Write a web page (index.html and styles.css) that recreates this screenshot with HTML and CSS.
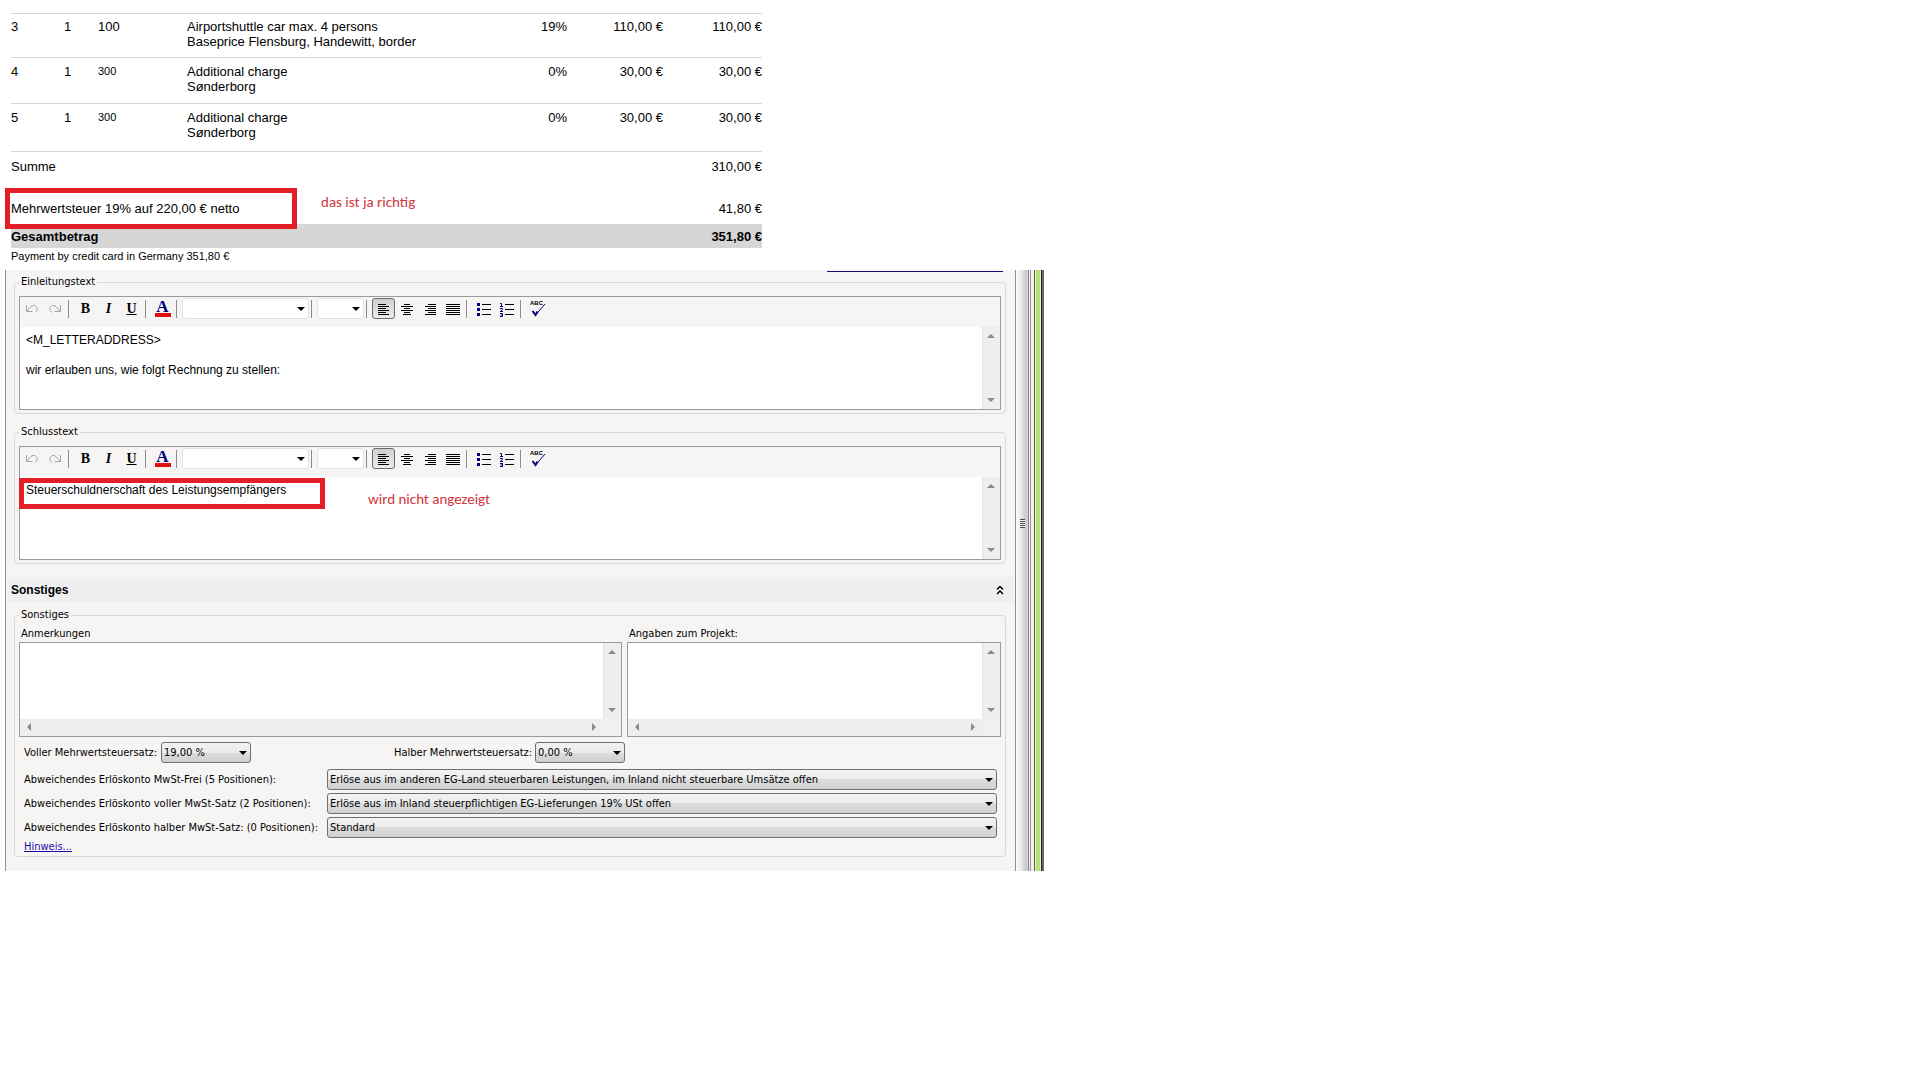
FILE: index.html
```html
<!DOCTYPE html>
<html lang="de">
<head>
    <meta charset="UTF-8">
    <meta name="viewport" content="width=device-width, initial-scale=1.0">
    <title>Rechnung</title>
    <link rel="stylesheet" href="styles.css">
</head>
<body>
<svg class="sprite" aria-hidden="true">
    <symbol id="undo" viewBox="0 0 16 16">
        <path d="M2.500 4v6.500h6M3 10l4-4.500 2-1h2l2 2v3l-2 2" fill="none" stroke="#a5a5a5"/>
    </symbol>
    <symbol id="redo" viewBox="0 0 16 16">
        <path d="M13.500 4v6.500h-6M13 10l-4-4.500-2-1h-2l-2 2v3l2 2" fill="none" stroke="#a5a5a5"/>
    </symbol>
    <symbol id="left" viewBox="0 0 16 16">
        <path d="M2 3.500h8M2 5.500h11M2 7.500h8M2 9.500h11M2 11.500h8M2 13.500h11" stroke="#000"/>
    </symbol>
    <symbol id="center" viewBox="0 0 16 16">
        <path d="M5 3.500h6M2 5.500h12M5 7.500h6M2 9.500h12M5 11.500h6M4 13.500h8" stroke="#000"/>
    </symbol>
    <symbol id="right" viewBox="0 0 16 16">
        <path d="M6 3.500h8M3 5.500h11M6 7.500h8M3 9.500h11M6 11.500h8M3 13.500h11" stroke="#000"/>
    </symbol>
    <symbol id="justify" viewBox="0 0 16 16">
        <path d="M1 3.500h14M1 5.500h14M1 7.500h14M1 9.500h14M1 11.500h14M1 13.500h14" stroke="#000"/>
    </symbol>
    <symbol id="bullets" viewBox="0 0 16 16">
        <path d="M1 2h3v3H1zM1 7h3v3H1zM1 12h3v3H1z" fill="#00007f"/>
        <path d="M6 3.500h9M6 8.500h9M6 13.500h9" stroke="#000"/>
    </symbol>
    <symbol id="numbers" viewBox="0 0 16 16">
        <path d="M1 2.500h1.500V5M1 5.500h3M1 7.500h2.500v1L1.500 10M1 10.500h3M1 12.500h2.500v3H1M1.500 14h2" fill="none" stroke="#00007f"/>
        <path d="M6 3.500h9M6 8.500h9M6 13.500h9" stroke="#000"/>
    </symbol>
    <symbol id="check" viewBox="0 0 16 16">
        <path d="M2.500 10l3 4 2-3.500" fill="none" stroke="#00007f" stroke-width="2"/>
        <path d="M6 13.500L15 3" fill="none" stroke="#00007f"/>
    </symbol>
    <symbol id="up" viewBox="0 0 8 8"><path d="M0 6h8L4 2z" fill="#8a8a8a"/></symbol>
    <symbol id="down" viewBox="0 0 8 8"><path d="M0 2h8L4 6z" fill="#8a8a8a"/></symbol>
    <symbol id="prev" viewBox="0 0 8 8"><path d="M6 0v8L2 4z" fill="#8a8a8a"/></symbol>
    <symbol id="next" viewBox="0 0 8 8"><path d="M2 0v8l4-4z" fill="#8a8a8a"/></symbol>
</svg>

<section class="invoice">
    <table class="positions">
        <colgroup>
            <col class="col-pos">
            <col class="col-qty">
            <col class="col-art">
            <col>
            <col class="col-tax">
            <col class="col-price">
            <col class="col-total">
        </colgroup>
        <tbody>
            <tr class="item">
                <td>3</td>
                <td>1</td>
                <td>100</td>
                <td>Airportshuttle car max. 4 persons<br>Baseprice Flensburg, Handewitt, border</td>
                <td class="num">19%</td>
                <td class="num">110,00 €</td>
                <td class="num">110,00 €</td>
            </tr>
            <tr class="item charge">
                <td>4</td>
                <td>1</td>
                <td class="small">300</td>
                <td>Additional charge<br>Sønderborg</td>
                <td class="num">0%</td>
                <td class="num">30,00 €</td>
                <td class="num">30,00 €</td>
            </tr>
            <tr class="item charge last">
                <td>5</td>
                <td>1</td>
                <td class="small">300</td>
                <td>Additional charge<br>Sønderborg</td>
                <td class="num">0%</td>
                <td class="num">30,00 €</td>
                <td class="num">30,00 €</td>
            </tr>
        </tbody>
        <tfoot>
            <tr class="sum">
                <td colspan="6">Summe</td>
                <td class="num">310,00 €</td>
            </tr>
            <tr class="vat">
                <td colspan="6">Mehrwertsteuer 19% auf 220,00 € netto</td>
                <td class="num">41,80 €</td>
            </tr>
            <tr class="total">
                <td colspan="6">Gesamtbetrag</td>
                <td class="num">351,80 €</td>
            </tr>
        </tfoot>
    </table>
    <p class="payment">Payment by credit card in Germany 351,80 €</p>
    <div class="mark mark-vat"></div>
    <div class="note note-vat">das ist ja richtig</div>
</section>

<div class="window">
    <form class="panel">
        <div class="link-line"></div>
        <fieldset>
            <legend>Einleitungstext</legend>
            <div class="editor">
                <div class="toolbar">
                    <button type="button" aria-label="Rückgängig"><svg><use href="#undo"/></svg></button>
                    <button type="button" aria-label="Wiederholen"><svg><use href="#redo"/></svg></button>
                    <span class="sep"></span>
                    <button type="button" class="bold">B</button>
                    <button type="button" class="italic">I</button>
                    <button type="button" class="underline">U</button>
                    <span class="sep"></span>
                    <button type="button" class="color"><span>A</span></button>
                    <span class="sep"></span>
                    <span class="select flat font"><select aria-label="Schriftart"><option></option></select></span>
                    <span class="sep"></span>
                    <span class="select flat size"><select aria-label="Schriftgröße"><option></option></select></span>
                    <span class="sep"></span>
                    <button type="button" class="active" aria-label="Linksbündig"><svg><use href="#left"/></svg></button>
                    <button type="button" aria-label="Zentriert"><svg><use href="#center"/></svg></button>
                    <button type="button" aria-label="Rechtsbündig"><svg><use href="#right"/></svg></button>
                    <button type="button" aria-label="Blocksatz"><svg><use href="#justify"/></svg></button>
                    <span class="sep"></span>
                    <button type="button" aria-label="Aufzählung"><svg><use href="#bullets"/></svg></button>
                    <button type="button" aria-label="Nummerierung"><svg><use href="#numbers"/></svg></button>
                    <span class="sep"></span>
                    <button type="button" class="spell"><span>ABC</span><svg><use href="#check"/></svg></button>
                </div>
                <div class="edit-area">
                    <textarea aria-label="Einleitungstext">&lt;M_LETTERADDRESS&gt;

wir erlauben uns, wie folgt Rechnung zu stellen:</textarea>
                    <div class="scroll-y"><svg><use href="#up"/></svg><svg><use href="#down"/></svg></div>
                </div>
            </div>
        </fieldset>

        <fieldset class="closing">
            <legend>Schlusstext</legend>
            <div class="editor">
                <div class="toolbar">
                    <button type="button" aria-label="Rückgängig"><svg><use href="#undo"/></svg></button>
                    <button type="button" aria-label="Wiederholen"><svg><use href="#redo"/></svg></button>
                    <span class="sep"></span>
                    <button type="button" class="bold">B</button>
                    <button type="button" class="italic">I</button>
                    <button type="button" class="underline">U</button>
                    <span class="sep"></span>
                    <button type="button" class="color"><span>A</span></button>
                    <span class="sep"></span>
                    <span class="select flat font"><select aria-label="Schriftart"><option></option></select></span>
                    <span class="sep"></span>
                    <span class="select flat size"><select aria-label="Schriftgröße"><option></option></select></span>
                    <span class="sep"></span>
                    <button type="button" class="active" aria-label="Linksbündig"><svg><use href="#left"/></svg></button>
                    <button type="button" aria-label="Zentriert"><svg><use href="#center"/></svg></button>
                    <button type="button" aria-label="Rechtsbündig"><svg><use href="#right"/></svg></button>
                    <button type="button" aria-label="Blocksatz"><svg><use href="#justify"/></svg></button>
                    <span class="sep"></span>
                    <button type="button" aria-label="Aufzählung"><svg><use href="#bullets"/></svg></button>
                    <button type="button" aria-label="Nummerierung"><svg><use href="#numbers"/></svg></button>
                    <span class="sep"></span>
                    <button type="button" class="spell"><span>ABC</span><svg><use href="#check"/></svg></button>
                </div>
                <div class="edit-area">
                    <textarea aria-label="Schlusstext">Steuerschuldnerschaft des Leistungsempfängers</textarea>
                    <div class="scroll-y"><svg><use href="#up"/></svg><svg><use href="#down"/></svg></div>
                </div>
            </div>
            <div class="mark mark-closing"></div>
            <div class="note note-closing">wird nicht angezeigt</div>
        </fieldset>

        <div class="group-header">
            <h2>Sonstiges</h2>
            <button type="button" aria-label="Einklappen">
                <svg viewBox="0 0 8 10"><path d="M1 4.500l3-3 3 3M1 9l3-3 3 3" fill="none" stroke="#000" stroke-width="1.500"/></svg>
            </button>
        </div>

        <fieldset class="misc">
            <legend>Sonstiges</legend>
            <div class="memos">
                <div class="memo">
                    <label for="notes">Anmerkungen</label>
                    <div class="memo-box">
                        <textarea id="notes"></textarea>
                        <div class="scroll-y"><svg><use href="#up"/></svg><svg><use href="#down"/></svg></div>
                        <div class="scroll-x"><svg><use href="#prev"/></svg><svg><use href="#next"/></svg></div>
                        <div class="corner"></div>
                    </div>
                </div>
                <div class="memo">
                    <label for="project">Angaben zum Projekt:</label>
                    <div class="memo-box">
                        <textarea id="project"></textarea>
                        <div class="scroll-y"><svg><use href="#up"/></svg><svg><use href="#down"/></svg></div>
                        <div class="scroll-x"><svg><use href="#prev"/></svg><svg><use href="#next"/></svg></div>
                        <div class="corner"></div>
                    </div>
                </div>
            </div>
            <div class="rates">
                <label for="full">Voller Mehrwertsteuersatz:</label>
                <span class="select"><select id="full"><option>19,00 %</option></select></span>
                <label for="half" class="half">Halber Mehrwertsteuersatz:</label>
                <span class="select"><select id="half"><option>0,00 %</option></select></span>
            </div>
            <div class="accounts">
                <label for="acc-free">Abweichendes Erlöskonto MwSt-Frei (5 Positionen):</label>
                <span class="select"><select id="acc-free"><option>Erlöse aus im anderen EG-Land steuerbaren Leistungen, im Inland nicht steuerbare Umsätze offen</option></select></span>
                <label for="acc-full">Abweichendes Erlöskonto voller MwSt-Satz (2 Positionen):</label>
                <span class="select"><select id="acc-full"><option>Erlöse aus im Inland steuerpflichtigen EG-Lieferungen 19% USt offen</option></select></span>
                <label for="acc-half">Abweichendes Erlöskonto halber MwSt-Satz: (0 Positionen):</label>
                <span class="select"><select id="acc-half"><option>Standard</option></select></span>
            </div>
            <a class="hint" href="#">Hinweis...</a>
        </fieldset>
    </form>
    <div class="splitter"><div class="grip"></div></div>
    <div class="edge"></div>
</div>
</body>
</html>
```
FILE: styles.css
```css
* {
    box-sizing: border-box;
}
body {
    margin: 0;
    padding: 13px 5px 0;
    background-color: #fff;
    color: #000;
    font-family: Tahoma, "DejaVu Sans Condensed", sans-serif;
    font-size: 11px;
    line-height: 14px;
}
.sprite {
    display: none;
}

/* invoice */
.invoice {
    position: relative;
    max-width: 757px;
    padding-left: 6px;
    font-family: Arial, "Liberation Sans", sans-serif;
    font-size: 13px;
    line-height: 15px;
}
.positions {
    width: 100%;
    table-layout: fixed;
    border-spacing: 0;
}
.col-pos {
    width: 53px;
}
.col-qty {
    width: 34px;
}
.col-art {
    width: 89px;
}
.col-tax {
    width: 87px;
}
.col-price {
    width: 96px;
}
.col-total {
    width: 99px;
}
.positions td {
    padding: 0;
    vertical-align: top;
}
.positions .num {
    text-align: right;
}
.positions .small {
    font-size: 11px;
}
.positions .item td {
    height: 44px;
    padding-top: 5px;
    border-top: 1px solid #d4d4d4;
}
.positions .charge td {
    height: 46px;
    padding-top: 6px;
}
.positions .last td {
    height: 48px;
}
.positions .sum td {
    height: 50px;
    padding-top: 7px;
    border-top: 1px solid #d4d4d4;
}
.positions .vat td {
    height: 23px;
}
.positions .total td {
    height: 24px;
    padding-top: 5px;
    background-color: #d6d6d6;
    font-weight: bold;
}
.payment {
    margin: 0;
    height: 22px;
    font-size: 11px;
    line-height: 16px;
}

/* red remarks */
.mark {
    position: absolute;
    border: 5px solid #e41e26;
}
.mark-vat {
    top: 175px;
    left: 0;
    width: 292px;
    height: 41px;
}
.mark-closing {
    top: 39px;
    left: 4px;
    width: 306px;
    height: 31px;
}
.note {
    position: absolute;
    color: #d2363c;
    font-family: Calibri, Lato, sans-serif;
    font-size: 15px;
    line-height: 18px;
}
.note-vat {
    top: 180px;
    left: 316px;
}
.note-closing {
    top: 51px;
    left: 353px;
}

/* application window */
.window {
    display: grid;
    grid-template-columns: 1fr 13px 16px;
    max-width: 1039px;
}
.panel {
    padding: 1px 2px 14px;
    border-left: 1px solid #8f8f93;
    background-color: #f6f5f4;
}
.link-line {
    width: 176px;
    height: 1px;
    margin: 0 10px 3px auto;
    background-color: #10107c;
}
fieldset {
    position: relative;
    min-width: 0;
    margin: 0 7px 11px 6px;
    padding: 7px 4px 3px;
    border: 1px solid #d5dadd;
    border-radius: 4px;
}
legend {
    padding: 0 2px;
}
button {
    padding: 0;
    border: 0;
    background: none;
    color: #000;
}
textarea {
    display: block;
    width: 100%;
    min-width: 0;
    padding: 6px 6px 5px;
    border: 0;
    outline: 0;
    resize: none;
    overflow: hidden;
    background-color: #fff;
    font-family: Arial, "Liberation Sans", sans-serif;
    font-size: 12px;
    line-height: 15px;
}
.editor,
.memo-box {
    border: 1px solid #9a9a9d;
}
.toolbar {
    display: flex;
    height: 30px;
    padding-top: 1px;
}
.toolbar button {
    display: flex;
    align-items: center;
    justify-content: center;
    width: 23px;
    height: 21px;
    font-family: "Times New Roman", "Liberation Serif", serif;
    font-size: 14px;
    font-weight: bold;
    line-height: 16px;
}
.toolbar svg {
    width: 16px;
    height: 16px;
}
.toolbar .italic {
    font-style: italic;
}
.toolbar .underline {
    text-decoration: underline;
}
.toolbar .active {
    border: 1px solid #6b6b6b;
    border-radius: 3px;
    background: linear-gradient(#cfcfcf, #ececec);
}
.toolbar .color span {
    width: 16px;
    height: 17px;
    border-bottom: 4px solid #dd1111;
    color: #00007f;
    font-size: 17px;
    line-height: 13px;
}
.toolbar .spell {
    position: relative;
}
.toolbar .spell span {
    position: absolute;
    top: 2px;
    left: 4px;
    font-family: "Liberation Sans", sans-serif;
    font-size: 6px;
    line-height: 6px;
}
.sep {
    width: 1px;
    height: 18px;
    margin: 2px 5px 0 2px;
    background-color: #8c8c8c;
}
.edit-area {
    display: grid;
    grid-template-columns: 1fr 18px;
    height: 82px;
}
.scroll-y,
.scroll-x {
    display: flex;
    justify-content: space-between;
    background-color: #eee;
}
.scroll-y {
    flex-direction: column;
    align-items: center;
    padding: 5px 2px 5px 0;
    border-left: 1px solid #e3e3e3;
}
.scroll-x {
    align-items: center;
    padding: 0 5px 2px;
}
.scroll-y svg,
.scroll-x svg {
    width: 8px;
    height: 8px;
}
.corner {
    background-color: #f0f0f0;
}

/* drop-downs */
.select {
    position: relative;
    display: block;
}
.select::after {
    content: "";
    position: absolute;
    top: 9px;
    right: 4px;
    border: 4px solid transparent;
    border-top-color: #000;
    border-bottom: 0;
    pointer-events: none;
}
.select select {
    display: block;
    width: 100%;
    height: 21px;
    padding: 0 16px 1px 2px;
    appearance: none;
    border: 1px solid #707070;
    border-radius: 3px;
    background: linear-gradient(#f2f2f2, #ebebeb 50%, #dddddd 50%, #cfcfcf);
    color: #000;
    font-family: inherit;
    font-size: 11px;
}
.select.flat select {
    border-color: #e2e3ea;
    background: #fff;
}
.font {
    width: 127px;
}
.size {
    width: 47px;
}

/* Sonstiges */
.group-header {
    display: flex;
    align-items: center;
    justify-content: space-between;
    height: 25px;
    margin: 13px 0 6px;
    padding: 0 9px 0 3px;
    background-color: #efefef;
}
.group-header h2 {
    margin: 0;
    font-family: Arial, "Liberation Sans", sans-serif;
    font-size: 12px;
}
.group-header svg {
    display: block;
    width: 8px;
    height: 10px;
}
.misc {
    margin-bottom: 0;
    padding: 5px 4px 2px;
}
.memos {
    display: grid;
    grid-template-columns: 603fr 374fr;
    gap: 5px;
}
.memo label {
    display: block;
    margin-bottom: 1px;
    padding-left: 2px;
}
.memo-box {
    display: grid;
    grid-template-columns: 1fr 18px;
    grid-template-rows: 1fr 17px;
    height: 95px;
}
.rates {
    display: grid;
    grid-template-columns: 137px 90px 284px 90px;
    align-items: center;
    margin: 5px 0 6px;
    padding-left: 5px;
}
.rates .half {
    padding-left: 143px;
}
.accounts {
    display: grid;
    grid-template-columns: 303px 1fr;
    align-items: center;
    gap: 3px 0;
    padding: 0 4px 0 5px;
}
.hint {
    display: block;
    margin: 2px 5px 0;
    color: #1a0dab;
}

/* right edge */
.splitter {
    padding: 249px 3px 0 4px;
    border-left: 1px solid #8f8f93;
    background: linear-gradient(90deg, #fbfbfb, #ececee 40%, #c6c6cc 85%, #d8d8dc);
}
.grip {
    height: 9px;
    background: repeating-linear-gradient(#4a4a4a 0, #4a4a4a 1px, #f4f4f4 1px, #f4f4f4 2px);
}
.edge {
    background: linear-gradient(90deg,
        #85858a 1px, #f1f1f1 1px, #f1f1f1 2px,
        #85858a 2px, #a9a9ad 3px, #f1f1f1 3px, #f1f1f1 6px,
        #4d6b30 6px, #4d6b30 7px, #e2f3c5 7px, #e2f3c5 8px,
        #b7e07c 8px, #b7e07c 12px, #e2f3c5 12px, #e2f3c5 13px,
        #222 13px, #222 14px, #6a6a6a 14px);
}
```
